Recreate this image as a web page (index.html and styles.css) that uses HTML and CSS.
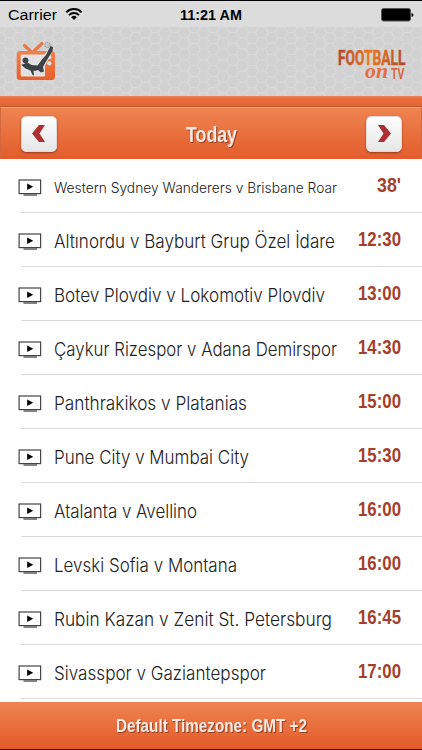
FILE: index.html
```html
<!DOCTYPE html>
<html lang="en">
<head>
    <meta charset="UTF-8">
    <meta name="viewport" content="width=device-width, initial-scale=1.0">
    <title>Football on TV</title>
    <link rel="stylesheet" href="styles.css">
</head>
<body>
    <svg width="0" height="0" class="defs">
        <symbol id="tv" viewBox="0 0 24 18">
            <rect x="1.100" y="1" width="21.500" height="13.600" fill="#fff" stroke="#444" stroke-width="1.200"/>
            <path d="M9.200 4.600v6.400l6-3.200z" fill="#000"/>
            <path d="M5.500 16h13.500" stroke="#777" stroke-width="1.800"/>
        </symbol>
    </svg>

    <div class="status-bar">
        <div class="carrier">
            <svg width="50" height="20"><text x="0" y="15" textLength="49" lengthAdjust="spacingAndGlyphs">Carrier</text></svg>
            <svg class="wifi" width="18" height="14" viewBox="0 0 18 14">
                <g fill="none" stroke="#000" stroke-width="2">
                    <path d="M1.300 5.200a11 11 0 0 1 15.400 0"/>
                    <path d="M4 8.100a7.100 7.100 0 0 1 10 0"/>
                </g>
                <path d="M6.200 10.200a4 4 0 0 1 5.600 0L9 13z"/>
            </svg>
        </div>
        <svg class="clock" width="64" height="20"><text x="1" y="15" textLength="62" lengthAdjust="spacingAndGlyphs">11:21 AM</text></svg>
        <svg class="battery" width="33" height="14" viewBox="0 0 33 14">
            <rect x="0.500" y="0.500" width="29" height="12.500" rx="2" fill="#000" stroke="#555"/>
            <path d="M30.500 5q2 .5 2 2t-2 2z"/>
        </svg>
    </div>

    <!-- Logos on the hexagon pattern -->
    <div class="header">
        <svg class="hexagons" width="422" height="69">
            <defs>
                <pattern id="hex" width="19.400" height="11" patternUnits="userSpaceOnUse">
                    <path d="M0 5.500h3.200L6.500 0h6.400l3.300 5.500h3.200M3.200 5.500L6.500 11h6.400l3.300-5.500" fill="none" stroke="#dadada" stroke-width="1.100"/>
                </pattern>
            </defs>
            <rect width="422" height="69" fill="url(#hex)"/>
        </svg>
        <svg class="logo" width="42" height="42" viewBox="0 0 42 42">
            <defs>
                <linearGradient id="orange" x1="0" y1="0" x2="0" y2="1">
                    <stop offset="0" stop-color="#ee814e"/>
                    <stop offset="1" stop-color="#e95e28"/>
                </linearGradient>
            </defs>
            <path d="M9.500 5.500l7 6.500M27 3.500L18 12" stroke="#ea7846" stroke-width="3.200" stroke-linecap="round"/>
            <rect x="1.700" y="11" width="38.300" height="29" rx="3.500" fill="url(#orange)"/>
            <path d="M6.700 14.500H29l5-5h4l-5 11-3 5v10q0 1-1 1H6.700q-1 0-1-1v-20q0-1 1-1z" fill="#e2e2e2"/>
            <circle cx="34.300" cy="17.200" r="2.100" fill="#e2e2e2"/>
            <circle cx="34.300" cy="23.300" r="2.100" fill="#e2e2e2"/>
            <circle cx="32.300" cy="5" r="2.700" fill="#c4c4c4" stroke="#777" stroke-width=".8" stroke-dasharray="1 1"/>
            <circle cx="10.500" cy="20.300" r="2.900" fill="#3c4146"/>
            <path d="M8.500 24l4-1.500 4 2.500 6 .5 4.500-6 4-4.500 4.500-9 2.500 1-.5 4-4 6.500-4 6.500-1.500 3 1 4.500-3 1-3-2.500-3 1-1.500-.5.500 5-1.500-.5-2-4.500-5-2-4-3.500-3 1z" fill="#3c4146"/>
        </svg>
        <svg class="brand" width="72" height="34" viewBox="0 0 72 34">
            <defs>
                <linearGradient id="brand-fill">
                    <stop offset="0" stop-color="#ad4a30"/>
                    <stop offset=".48" stop-color="#ec7a21"/>
                    <stop offset="1" stop-color="#ad4a30"/>
                </linearGradient>
            </defs>
            <text class="brand-main" x="1" y="16" textLength="67.500" lengthAdjust="spacingAndGlyphs" fill="url(#brand-fill)" stroke="url(#brand-fill)">FOOTBALL</text>
            <text class="brand-on" x="28" y="28.500" textLength="23" lengthAdjust="spacingAndGlyphs">on</text>
            <text class="brand-tv" x="54" y="29.500" textLength="13.500" lengthAdjust="spacingAndGlyphs">TV</text>
        </svg>
    </div>

    <div class="strip"></div>
    <div class="nav">
        <button class="nav-btn"><svg width="16" height="20" viewBox="0 0 16 20"><path d="M8 1h6L8.500 9.500 14 18H8L1 9.500z" fill="#ad2f32"/></svg></button>
        <svg class="nav-title" width="54" height="30"><text x="1" y="23" textLength="51" lengthAdjust="spacingAndGlyphs">Today</text></svg>
        <button class="nav-btn"><svg width="16" height="20" viewBox="0 0 16 20"><path d="M8 1H2l5.500 8.500L2 18h6l7-8.500z" fill="#ad2f32"/></svg></button>
    </div>

    <div class="matches" id="matches"></div>

    <div class="footer">
        <svg width="194" height="30"><text x="2" y="21" textLength="191" lengthAdjust="spacingAndGlyphs">Default Timezone: GMT +2</text></svg>
    </div>

    <script src="script.js"></script>
</body>
</html>
```
FILE: styles.css
```css
* {
    margin: 0;
    padding: 0;
    box-sizing: border-box;
}

body {
    width: 422px;
    height: 750px;
    overflow: hidden;
    display: flex;
    flex-direction: column;
    background: #fff;
    font-family: Inter, "Liberation Sans", sans-serif;
}

svg {
    display: block;
    flex: none;
    overflow: visible;
}

.defs {
    position: absolute;
}

.status-bar {
    height: 27px;
    flex: none;
    border-top: 1px solid #000;
    background: #dcdcdc;
    display: grid;
    grid-template-columns: 1fr auto 1fr;
    align-items: center;
    padding: 2px 8px 0;
    font-family: "Liberation Sans", sans-serif;
    font-size: 15.5px;
}

.carrier {
    display: flex;
    align-items: center;
    gap: 7px;
}

.wifi {
    margin-top: -3px;
}

.clock {
    font-weight: bold;
    font-size: 15.5px;
}

.battery {
    justify-self: end;
}

.header {
    height: 69px;
    flex: none;
    display: flex;
    justify-content: space-between;
    padding: 13px 15px 0;
    background: #d2d2d2;
    position: relative;
}

.hexagons {
    position: absolute;
    left: 0;
    top: 0;
}

.logo,
.brand {
    position: relative;
}

.brand {
    margin: 9px -2px 0 0;
}

.brand text {
    font-family: "Roboto", sans-serif;
    font-weight: bold;
}

.brand .brand-main {
    font-size: 20px;
    stroke-width: 0.5px;
}

.brand .brand-on {
    font-family: "Liberation Serif", serif;
    font-style: italic;
    font-size: 21px;
    fill: #e46d43;
}

.brand .brand-tv {
    font-size: 15px;
    fill: #d8683f;
}

.strip {
    height: 11px;
    flex: none;
    background: linear-gradient(#ed8354, #e96c3b 30%, #e46531);
    border-bottom: 1px solid #bd5b32;
}

.nav {
    height: 52px;
    flex: none;
    display: flex;
    align-items: center;
    justify-content: space-between;
    padding: 0 19px 0 20px;
    background: linear-gradient(#ee8451, #e35c2b);
    border-top: 1px solid #f19a70;
    border-left: 1px solid #d3673e;
    border-right: 1px solid #d3673e;
}

.nav-btn {
    width: 36px;
    height: 36px;
    display: flex;
    align-items: center;
    justify-content: center;
    border: 1px solid #e4d8d4;
    border-radius: 5px;
    background: linear-gradient(#fff, #e6e6e6);
    box-shadow: 0 1px 2px rgba(100, 30, 10, 0.6);
}

.nav-title,
.footer svg {
    font-family: "Liberation Sans", sans-serif;
    font-weight: bold;
    fill: #fae9e2;
    filter: drop-shadow(1px 1px 0 rgba(100, 40, 20, 0.6));
}

.nav-title {
    font-size: 22.5px;
}

.matches {
    height: 543px;
    flex: none;
}

.match {
    height: 54px;
    display: flex;
    align-items: center;
    justify-content: space-between;
    margin-left: 18px;
    padding-right: 20px;
    background: linear-gradient(#d9d9d9, #d9d9d9) 3px 100% / 100% 1px no-repeat;
}

.tv {
    margin-top: 3px;
}

.name {
    flex: 1;
    margin-left: 11px;
    height: 30px;
    font-size: 18.5px;
    font-weight: 300;
    fill: #222;
}

.name.small {
    font-size: 14px;
}

.time {
    height: 30px;
    font-family: "Liberation Sans", sans-serif;
    font-weight: bold;
    font-size: 20px;
    fill: #a43f2a;
}

.footer {
    height: 48px;
    flex: none;
    display: flex;
    align-items: center;
    justify-content: center;
    background: linear-gradient(#ee8451, #e35a29);
    border-bottom: 1px solid #301008;
    font-size: 18.5px;
}
```
FILE: script.js
```js
// team names, width of the name, kickoff or minute played, width of the time
const matches = [
    ['Western Sydney Wanderers v Brisbane Roar', 283, "38'", 24],
    ['Altınordu v Bayburt Grup Özel İdare', 281, '12:30', 43],
    ['Botev Plovdiv v Lokomotiv Plovdiv', 271, '13:00', 43],
    ['Çaykur Rizespor v Adana Demirspor', 283, '14:30', 43],
    ['Panthrakikos v Platanias', 193, '15:00', 43],
    ['Pune City v Mumbai City', 195, '15:30', 43],
    ['Atalanta v Avellino', 143, '16:00', 43],
    ['Levski Sofia v Montana', 183, '16:00', 43],
    ['Rubin Kazan v Zenit St. Petersburg', 278, '16:45', 43],
    ['Sivasspor v Gaziantepspor', 212, '17:00', 43]
];

document.getElementById('matches').innerHTML = matches.map(([name, nameWidth, time, timeWidth], i) => `
    <div class="match">
        <svg class="tv" width="24" height="18"><use href="#tv"/></svg>
        <svg class="name ${i === 0 ? 'small' : ''}"><text x="1" y="${i === 0 ? 22 : 23}" textLength="${nameWidth}" lengthAdjust="spacingAndGlyphs">${name}</text></svg>
        <svg class="time" width="${timeWidth + 1}"><text x="0" y="21" textLength="${timeWidth}" lengthAdjust="spacingAndGlyphs">${time}</text></svg>
    </div>`).join('');
```
